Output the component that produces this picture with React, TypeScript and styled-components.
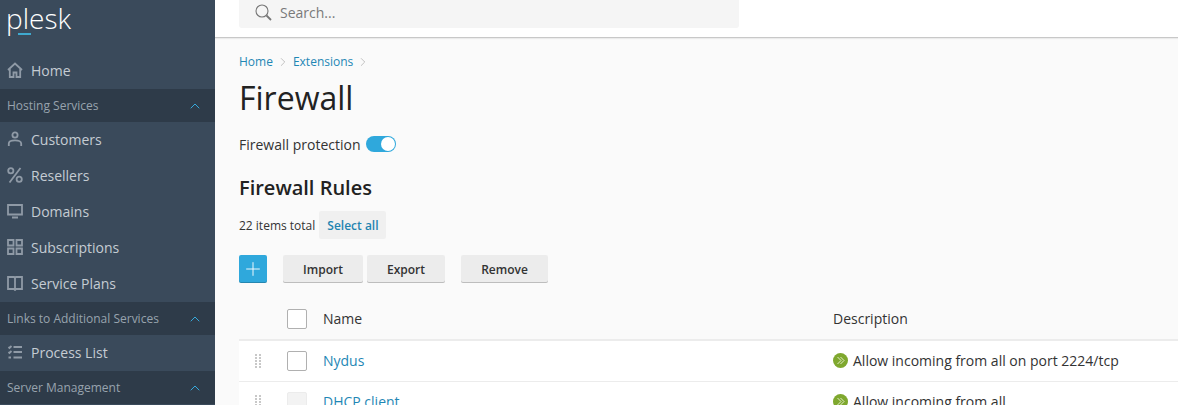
import { ReactNode } from "react";
import styled, { createGlobalStyle } from "styled-components";
import { ChevronRight, ChevronUp, Plus } from "lucide-react";

const GlobalStyle = createGlobalStyle`
  html, body {
    margin: 0;
    height: 405px;
    overflow: hidden;
    background: #fafafa;
    font-family: "Open Sans", "Liberation Sans", sans-serif;
    -webkit-font-smoothing: antialiased;
  }
`;

const Page = styled.div`
  display: flex;
  width: 1178px;
  height: 405px;
  overflow: hidden;
`;

const Sidebar = styled.nav`
  width: 215px;
  flex: none;
  background: #3a4a5b;
`;

const LogoBox = styled.div`
  position: relative;
  height: 53px;
  box-sizing: border-box;
  padding: 0 0 0 6px;
`;

const LogoText = styled.div`
  color: #fff;
  font-size: 28px;
  font-weight: 300;
  line-height: 36px;
`;

const LogoDash = styled.span`
  position: absolute;
  left: 18px;
  top: 33px;
  width: 13px;
  height: 2px;
  background: #3fa9cf;
`;

const NavItem = styled.div`
  display: flex;
  align-items: center;
  box-sizing: border-box;
  height: 36px;
  padding: 0 0 2px 7px;
  gap: 8px;
  color: #c5ccd3;
  font-size: 14px;
`;

const NavIcon = styled.svg`
  width: 16px;
  height: 16px;
  flex: none;
  fill: none;
  stroke: #8f9aa6;
  stroke-width: 1.8;
`;

const NavGroup = styled.div`
  display: flex;
  align-items: center;
  justify-content: space-between;
  height: 33px;
  padding: 0 12px 0 7px;
  background: #2e3b49;
  color: #98a3ae;
  font-size: 12px;
`;

const Main = styled.main`
  flex: 1;
  min-width: 0;
`;

const TopBar = styled.header`
  height: 37px;
  padding: 0 24px;
  background: #fff;
  border-bottom: 1px solid #c8c8c8;
  box-shadow: 0 1px 1px rgba(0, 0, 0, 0.06);
`;

const SearchBox = styled.div`
  display: flex;
  align-items: center;
  gap: 8px;
  width: 500px;
  height: 28px;
  padding: 0 0 3px 16px;
  box-sizing: border-box;
  background: #f5f5f5;
  border-radius: 0 0 3px 3px;
  color: #7a7a7a;
  font-size: 14px;
`;

const Content = styled.div`
  padding: 15px 0 0 24px;
`;

const Crumbs = styled.div`
  display: flex;
  align-items: center;
  gap: 3px;
  height: 17px;
  font-size: 12px;
  color: #999;
`;

const Link = styled.a`
  color: #1f87b5;
`;

const Title = styled.h1`
  margin: 8px 0 0;
  font-size: 32px;
  font-weight: 400;
  line-height: 40px;
  color: #222;
`;

const ProtectionRow = styled.div`
  display: flex;
  align-items: center;
  gap: 6px;
  margin-top: 16px;
  height: 20px;
  font-size: 14px;
  color: #333;
`;

const Toggle = styled.span`
  position: relative;
  width: 30px;
  height: 16px;
  border-radius: 8px;
  background: #2fa8dc;
`;

const Knob = styled.span`
  position: absolute;
  right: 1px;
  top: 1px;
  width: 14px;
  height: 14px;
  border-radius: 50%;
  background: #fff;
`;

const Heading = styled.h2`
  margin: 20px 0 0;
  font-size: 20px;
  font-weight: 600;
  line-height: 27px;
  color: #222;
`;

const TotalRow = styled.div`
  display: flex;
  align-items: center;
  gap: 4px;
  margin-top: 10px;
  font-size: 12px;
  color: #333;
`;

const SelectAll = styled.span`
  display: flex;
  align-items: center;
  height: 28px;
  padding: 0 7px 0 8px;
  background: #f0f0f0;
  border-radius: 2px;
  color: #1f84b0;
  font-weight: 600;
`;

const Toolbar = styled.div`
  display: flex;
  align-items: center;
  margin-top: 16px;
`;

const AddButton = styled.span`
  display: flex;
  align-items: center;
  justify-content: center;
  width: 28px;
  height: 28px;
  margin-right: 16px;
  background: #2fa8dc;
  border-radius: 2px;
  box-shadow: inset 0 -1px 0 rgba(0, 0, 0, 0.2);
`;

const ToolButton = styled.span<{ $width: number; $gap?: number }>`
  display: flex;
  align-items: center;
  justify-content: center;
  width: ${(p) => p.$width}px;
  height: 28px;
  margin-right: ${(p) => p.$gap ?? 0}px;
  background: #ececec;
  border-radius: 2px;
  box-shadow: inset 0 -1px 0 #bdbdbd;
  font-size: 12px;
  font-weight: 600;
  color: #333;
`;

const TableHead = styled.div`
  display: grid;
  grid-template-columns: 48px 36px 510px 1fr;
  align-items: center;
  height: 35px;
  margin-top: 19px;
  padding-bottom: 2px;
  border-bottom: 2px solid #ececec;
  font-size: 14px;
  color: #333;
`;

const TableRow = styled.div`
  display: grid;
  grid-template-columns: 48px 36px 510px 1fr;
  align-items: center;
  height: 40px;
  background: #fff;
  border-bottom: 1px solid #ececec;
  font-size: 14px;
  color: #333;
`;

const Handle = styled.svg`
  justify-self: start;
  margin-left: 16px;
  width: 7px;
  height: 14px;
  fill: #c8c8c8;
`;

const Check = styled.span<{ $disabled?: boolean }>`
  display: block;
  width: 18px;
  height: 18px;
  background: ${(p) => (p.$disabled ? "#f3f3f3" : "#fff")};
  border: 1px solid ${(p) => (p.$disabled ? "#ececec" : "#b0b0b0")};
  border-radius: 2px;
`;

const Cell = styled.span`
  display: flex;
  align-items: center;
  gap: 5px;
  padding-bottom: 2px;
`;

const CheckHead = styled(Cell)`
  grid-column: 2;
`;

const iconPaths: Record<string, ReactNode> = {
  home: <path d="M1 8 8 1.500 15 8M2.800 6.500V15h3.700v-4.500h3V15h3.700V6.500" />,
  user: (
    <>
      <circle cx="8" cy="4" r="2.600" />
      <path d="M1.800 15v-2.500C1.800 10.500 4 9.400 8 9.400s6.200 1.100 6.200 3.100V15" />
    </>
  ),
  percent: (
    <>
      <circle cx="3.800" cy="3.800" r="2.600" />
      <circle cx="12.200" cy="12.200" r="2.600" />
      <path d="M13.500 1 2.500 15.500" />
    </>
  ),
  monitor: <path d="M1 2h14v9.500H1zM5 14.500h6" />,
  grid: <path d="M1 1h5.500v5.500H1zM9.500 1H15v5.500H9.500zM1 9.500h5.500V15H1zM9.500 9.500H15V15H9.500z" />,
  book: <path d="M1 2h6l1 1 1-1h6v12H9l-1 1-1-1H1zM8 3v11" />,
  list: (
    <path d="M6.500 3H15M6.500 8H15M6.500 13.500H15M1.500 3l1 1 2-2M1.500 8l1 1 2-2M1.500 13.500h2.500" />
  ),
};

function Item({ icon, label }: { icon: string; label: string }) {
  return (
    <NavItem>
      <NavIcon viewBox="0 0 16 16">{iconPaths[icon]}</NavIcon>
      {label}
    </NavItem>
  );
}

function Group({ label }: { label: string }) {
  return (
    <NavGroup>
      {label}
      <ChevronUp size={16} color="#35a9dc" strokeWidth={1.500} />
    </NavGroup>
  );
}

function DragHandle() {
  return (
    <Handle viewBox="0 0 7 14">
      {[0, 3, 6, 9, 12].map((y) => (
        <g key={y}>
          <rect x="0" y={y} width="2" height="2" />
          <rect x="4" y={y} width="2" height="2" />
        </g>
      ))}
    </Handle>
  );
}

function AllowIcon() {
  return (
    <svg width="15" height="15" viewBox="0 0 15 15" style={{ flex: "none" }}>
      <circle cx="7.500" cy="7.500" r="7.500" fill="#7fa82e" />
      <path d="M4.500 4 8 7.500 4.500 11M7.500 4 11 7.500 7.500 11" fill="none" stroke="#e4eecb" strokeWidth="1" />
    </svg>
  );
}

export default function App() {
  return (
    <Page>
      <GlobalStyle />
      <Sidebar>
        <LogoBox>
          <LogoText>plesk</LogoText>
          <LogoDash />
        </LogoBox>
        <Item icon="home" label="Home" />
        <Group label="Hosting Services" />
        <Item icon="user" label="Customers" />
        <Item icon="percent" label="Resellers" />
        <Item icon="monitor" label="Domains" />
        <Item icon="grid" label="Subscriptions" />
        <Item icon="book" label="Service Plans" />
        <Group label="Links to Additional Services" />
        <Item icon="list" label="Process List" />
        <Group label="Server Management" />
      </Sidebar>
      <Main>
        <TopBar>
          <SearchBox>
            <svg width="17" height="17" viewBox="0 0 17 17" fill="none" stroke="#777" strokeWidth="1.100">
              <circle cx="7" cy="7" r="6" />
              <path d="m11.500 11.500 4.500 4.500" strokeWidth="1.800" />
            </svg>
            Search...
          </SearchBox>
        </TopBar>
        <Content>
          <Crumbs>
            <Link>Home</Link>
            <ChevronRight size={14} strokeWidth={1} />
            <Link>Extensions</Link>
            <ChevronRight size={14} strokeWidth={1} />
          </Crumbs>
          <Title>Firewall</Title>
          <ProtectionRow>
            Firewall protection
            <Toggle>
              <Knob />
            </Toggle>
          </ProtectionRow>
          <Heading>Firewall Rules</Heading>
          <TotalRow>
            22 items total
            <SelectAll>Select all</SelectAll>
          </TotalRow>
          <Toolbar>
            <AddButton>
              <Plus size={22} color="#fff" strokeWidth={1} />
            </AddButton>
            <ToolButton $width={80} $gap={4}>Import</ToolButton>
            <ToolButton $width={78} $gap={16}>Export</ToolButton>
            <ToolButton $width={87}>Remove</ToolButton>
          </Toolbar>
          <TableHead>
            <CheckHead>
              <Check />
            </CheckHead>
            <Cell>Name</Cell>
            <Cell>Description</Cell>
          </TableHead>
          <TableRow>
            <DragHandle />
            <Check />
            <Cell>
              <Link>Nydus</Link>
            </Cell>
            <Cell>
              <AllowIcon />
              Allow incoming from all on port 2224/tcp
            </Cell>
          </TableRow>
          <TableRow>
            <DragHandle />
            <Check $disabled />
            <Cell>
              <Link>DHCP client</Link>
            </Cell>
            <Cell>
              <AllowIcon />
              Allow incoming from all
            </Cell>
          </TableRow>
        </Content>
      </Main>
    </Page>
  );
}
